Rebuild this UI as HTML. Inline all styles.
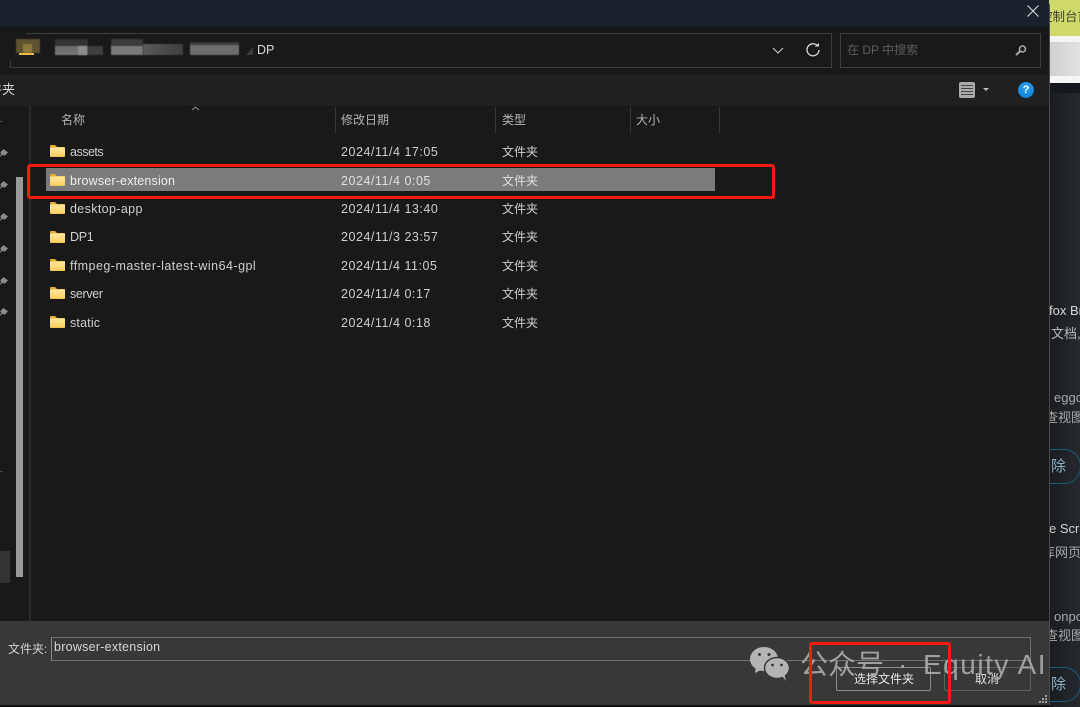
<!DOCTYPE html>
<html><head><meta charset="utf-8">
<style>
html,body{margin:0;padding:0}
body{width:1080px;height:707px;position:relative;overflow:hidden;background:#1b1f24;font-family:"Liberation Sans","Noto Sans CJK SC",sans-serif;font-size:12.5px;color:#cfcfcf}
.a{position:absolute}
.t{position:absolute;white-space:nowrap;line-height:16px}
.c{font-size:12px}
.d{letter-spacing:.53px}
.f{position:absolute;left:50px;width:15px;height:12px}
.sep{position:absolute;top:107px;width:1px;height:26px;background:#3a3a3a}
.pin{position:absolute;left:-1px;width:9px;height:9px}
.m{position:absolute;filter:blur(.6px)}
</style></head><body>
<!-- background window at right -->
<div class="a" style="left:1049px;top:0;width:31px;height:36px;background:#d0d96c"></div>
<div class="a" style="left:1049px;top:36px;width:31px;height:6px;background:#f4f4f4"></div>
<div class="a" style="left:1049px;top:42px;width:31px;height:34px;background:linear-gradient(90deg,#cfcfcf,#e2e2e2)"></div>
<div class="a" style="left:1049px;top:76px;width:31px;height:7px;background:#f6f6f6"></div>
<div class="a" style="left:1049px;top:83px;width:31px;height:624px;background:linear-gradient(90deg,#1a1c1f,#25292e)"></div>
<div class="a" style="left:1049px;top:83px;width:31px;height:10px;background:#15181c"></div>
<div class="t" style="left:1040px;top:9px;color:#3c4230;font-size:12.5px">控制台首</div>
<div class="t" style="left:1049px;top:303px;font-size:13px;color:#d8d8d8">fox Br</div>
<div class="t" style="left:1051px;top:326px;font-size:13px;color:#b8b8b8">文档,</div>
<div class="t" style="left:1054px;top:390px;font-size:13px;color:#a8a8a8">eggc</div>
<div class="t" style="left:1045px;top:410px;font-size:13px;color:#a8a8a8">查视图</div>
<div class="a" style="left:1020px;top:449px;width:61px;height:35px;border:1px solid #1b5a78;border-radius:17px;box-sizing:border-box"></div>
<div class="t" style="left:1036px;top:459px;font-size:15px;color:#8cb0c4">移除</div>
<div class="t" style="left:1049px;top:521px;font-size:13px;color:#d0d0d0">e Scra</div>
<div class="t" style="left:1042px;top:545px;font-size:13px;color:#a8a8a8">库网页</div>
<div class="t" style="left:1054px;top:609px;font-size:13px;color:#a8a8a8">onpo</div>
<div class="t" style="left:1045px;top:628px;font-size:13px;color:#a8a8a8">查视图</div>
<div class="a" style="left:1020px;top:667px;width:61px;height:35px;border:1px solid #1b5a78;border-radius:17px;box-sizing:border-box"></div>
<div class="t" style="left:1036px;top:677px;font-size:15px;color:#8cb0c4">移除</div>

<!-- dialog -->
<div class="a" style="left:0;top:0;width:1049px;height:705px;background:#191919;border-right:1px solid #4a4a4a;box-sizing:content-box;border-top-right-radius:6px;overflow:hidden">
  <div class="a" style="left:0;top:0;width:1049px;height:26px;background:#1a232c"></div>
  <div class="a" style="left:0;top:75px;width:1049px;height:31px;background:#202020"></div>
  <div class="a" style="left:0;top:621px;width:1049px;height:84px;background:#383838"></div>
</div>
<div class="a" style="left:0;top:705px;width:1049px;height:2px;background:#111"></div>

<!-- close -->
<svg class="a" style="left:1026px;top:4px" width="14" height="14" viewBox="0 0 14 14"><path d="M1.500 1.500L12.500 12.500M12.500 1.500L1.500 12.500" stroke="#e0e0e0" stroke-width="1" fill="none"/></svg>

<!-- address bar -->
<div class="a" style="left:10px;top:33px;width:822px;height:35px;border:1px solid #3d3d3d;box-sizing:border-box"></div>
<div class="a" style="left:0;top:30px;width:26px;height:30px;background:#191919"></div>
<div class="m" style="left:16px;top:39px;width:24px;height:14px;background:#5f5230"></div>
<div class="m" style="left:23px;top:44px;width:9px;height:9px;background:#8e7a3c"></div>
<div class="a" style="left:19px;top:53px;width:15px;height:2px;background:#e8b94a"></div>
<div class="m" style="left:55px;top:39px;width:33px;height:16px;background:linear-gradient(180deg,#333 0 45%,#6f6f6f 45% 80%,#7e7e7e 100%)"></div>
<div class="m" style="left:78px;top:46px;width:9px;height:9px;background:#8c8c8c"></div>
<div class="m" style="left:88px;top:46px;width:15px;height:9px;background:#3e3e3e"></div>
<div class="m" style="left:111px;top:39px;width:32px;height:16px;background:linear-gradient(180deg,#3a3a3a 0 45%,#7a7a7a 45% 100%)"></div>
<div class="m" style="left:143px;top:44px;width:40px;height:11px;background:linear-gradient(90deg,#5a5a5a,#3e3e3e)"></div>
<div class="m" style="left:190px;top:42px;width:49px;height:13px;background:linear-gradient(180deg,#3c3c3c 0 25%,#6c6c6c 25% 100%)"></div>
<svg class="a" style="left:246px;top:47px" width="8" height="8"><path d="M7 0V8H0Z" fill="#3a3a3a"/></svg>
<div class="t" style="left:257px;top:42px;color:#d8d8d8">DP</div>
<svg class="a" style="left:771px;top:46px" width="14" height="10" viewBox="0 0 14 10"><path d="M2 2L7 7L12 2" stroke="#cfcfcf" stroke-width="1.100" fill="none"/></svg>
<svg class="a" style="left:805px;top:42px" width="16" height="16" viewBox="0 0 16 16"><path d="M12.500 3.800A6 6 0 1 0 14 8" stroke="#d8d8d8" stroke-width="1.300" fill="none"/><path d="M9.500 4.500L14 4.500L14 1Z" fill="#d8d8d8"/></svg>
<div class="a" style="left:840px;top:33px;width:201px;height:35px;border:1px solid #3d3d3d;box-sizing:border-box"></div>
<div class="t" style="left:847px;top:42px;color:#5c5c5c;font-size:12px">在 DP 中搜索</div>
<svg class="a" style="left:1014px;top:44px" width="14" height="13" viewBox="0 0 14 13"><circle cx="8.500" cy="5" r="3" stroke="#a8a8a8" stroke-width="1.600" fill="none"/><path d="M6.300 7L2 11" stroke="#a8a8a8" stroke-width="2"/></svg>

<!-- toolbar -->
<div class="t" style="left:-11px;top:82px;color:#d4d4d4;font-size:13px">件夹</div>
<div class="a" style="left:959px;top:82px;width:16px;height:16px;background:#aaa;border-radius:2px"></div>
<div class="a" style="left:961px;top:85px;width:12px;height:1px;background:#444"></div>
<div class="a" style="left:961px;top:88px;width:12px;height:1px;background:#444"></div>
<div class="a" style="left:961px;top:91px;width:12px;height:1px;background:#444"></div>
<div class="a" style="left:961px;top:94px;width:12px;height:1px;background:#444"></div>
<svg class="a" style="left:983px;top:87px" width="7" height="5"><path d="M0 1H6L3 4Z" fill="#bbb"/></svg>
<div class="a" style="left:1018px;top:82px;width:16px;height:16px;border-radius:50%;background:radial-gradient(circle at 50% 35%,#2ba3f0,#0b78d0);color:#fff;font-size:11px;font-weight:bold;line-height:16px;text-align:center">?</div>

<!-- nav pane -->
<div class="a" style="left:29px;top:106px;width:2px;height:515px;background:#2a2a2a"></div>
<div class="a" style="left:16px;top:177px;width:7px;height:400px;background:#9b9b9b"></div>
<div class="a" style="left:0;top:551px;width:10px;height:32px;background:#333"></div>
<div class="a" style="left:0;top:471px;width:3px;height:1px;background:#444"></div>
<div class="a" style="left:0;top:121px;width:3px;height:1px;background:#444"></div>
<svg class="pin" style="top:149px" viewBox="0 0 8 8"><path d="M4 0L8 3L5 6L3 5L0 8L2 4L1 3Z" fill="#8c8c8c"/></svg>
<svg class="pin" style="top:181px" viewBox="0 0 8 8"><path d="M4 0L8 3L5 6L3 5L0 8L2 4L1 3Z" fill="#8c8c8c"/></svg>
<svg class="pin" style="top:213px" viewBox="0 0 8 8"><path d="M4 0L8 3L5 6L3 5L0 8L2 4L1 3Z" fill="#8c8c8c"/></svg>
<svg class="pin" style="top:245px" viewBox="0 0 8 8"><path d="M4 0L8 3L5 6L3 5L0 8L2 4L1 3Z" fill="#8c8c8c"/></svg>
<svg class="pin" style="top:277px" viewBox="0 0 8 8"><path d="M4 0L8 3L5 6L3 5L0 8L2 4L1 3Z" fill="#8c8c8c"/></svg>
<svg class="pin" style="top:308px" viewBox="0 0 8 8"><path d="M4 0L8 3L5 6L3 5L0 8L2 4L1 3Z" fill="#8c8c8c"/></svg>

<!-- headers -->
<svg class="a" style="left:191px;top:106px" width="9" height="5"><path d="M1 4L4.500 1L8 4" stroke="#8a8a8a" fill="none"/></svg>
<div class="t c" style="left:61px;top:112px;color:#b4b4b4">名称</div>
<div class="sep" style="left:335px"></div>
<div class="t c" style="left:341px;top:112px;color:#b4b4b4">修改日期</div>
<div class="sep" style="left:495px"></div>
<div class="t c" style="left:502px;top:112px;color:#b4b4b4">类型</div>
<div class="sep" style="left:630px"></div>
<div class="t c" style="left:636px;top:112px;color:#b4b4b4">大小</div>
<div class="sep" style="left:719px"></div>

<!-- selected row -->
<div class="a" style="left:46px;top:168px;width:669px;height:23px;background:#7b7b7b"></div>

<!-- rows -->
<svg width="0" height="0" style="position:absolute"><defs><linearGradient id="g" x1="0" y1="0" x2="0" y2="1"><stop offset="0" stop-color="#ffe89c"/><stop offset="1" stop-color="#fbd060"/></linearGradient></defs></svg>
<svg class="f" style="top:145px" viewBox="0 0 15 12"><path d="M0 1Q0 0 1 0H5L7 2H0Z" fill="#e8ad2e"/><rect x="0" y="2" width="15" height="10" rx="1" fill="#eebb44"/><rect x="0" y="2.600" width="15" height="8.800" fill="url(#g)"/></svg>
<svg class="f" style="top:174px" viewBox="0 0 15 12"><path d="M0 1Q0 0 1 0H5L7 2H0Z" fill="#e8ad2e"/><rect x="0" y="2" width="15" height="10" rx="1" fill="#eebb44"/><rect x="0" y="2.600" width="15" height="8.800" fill="url(#g)"/></svg>
<svg class="f" style="top:202px" viewBox="0 0 15 12"><path d="M0 1Q0 0 1 0H5L7 2H0Z" fill="#e8ad2e"/><rect x="0" y="2" width="15" height="10" rx="1" fill="#eebb44"/><rect x="0" y="2.600" width="15" height="8.800" fill="url(#g)"/></svg>
<svg class="f" style="top:231px" viewBox="0 0 15 12"><path d="M0 1Q0 0 1 0H5L7 2H0Z" fill="#e8ad2e"/><rect x="0" y="2" width="15" height="10" rx="1" fill="#eebb44"/><rect x="0" y="2.600" width="15" height="8.800" fill="url(#g)"/></svg>
<svg class="f" style="top:259px" viewBox="0 0 15 12"><path d="M0 1Q0 0 1 0H5L7 2H0Z" fill="#e8ad2e"/><rect x="0" y="2" width="15" height="10" rx="1" fill="#eebb44"/><rect x="0" y="2.600" width="15" height="8.800" fill="url(#g)"/></svg>
<svg class="f" style="top:287px" viewBox="0 0 15 12"><path d="M0 1Q0 0 1 0H5L7 2H0Z" fill="#e8ad2e"/><rect x="0" y="2" width="15" height="10" rx="1" fill="#eebb44"/><rect x="0" y="2.600" width="15" height="8.800" fill="url(#g)"/></svg>
<svg class="f" style="top:316px" viewBox="0 0 15 12"><path d="M0 1Q0 0 1 0H5L7 2H0Z" fill="#e8ad2e"/><rect x="0" y="2" width="15" height="10" rx="1" fill="#eebb44"/><rect x="0" y="2.600" width="15" height="8.800" fill="url(#g)"/></svg>

<div class="t" style="left:70px;top:144px;letter-spacing:-.5px">assets</div>
<div class="t d" style="left:341px;top:144px">2024/11/4 17:05</div>
<div class="t c" style="left:502px;top:144px">文件夹</div>

<div class="t" style="left:70px;top:173px;color:#eeeeee;letter-spacing:.18px">browser-extension</div>
<div class="t d" style="left:341px;top:173px;color:#e0e0e0">2024/11/4 0:05</div>
<div class="t c" style="left:502px;top:173px;color:#e0e0e0">文件夹</div>

<div class="t" style="left:70px;top:201px;letter-spacing:.36px">desktop-app</div>
<div class="t d" style="left:341px;top:201px">2024/11/4 13:40</div>
<div class="t c" style="left:502px;top:201px">文件夹</div>

<div class="t" style="left:70px;top:229px;letter-spacing:-.3px">DP1</div>
<div class="t d" style="left:341px;top:229px">2024/11/3 23:57</div>
<div class="t c" style="left:502px;top:229px">文件夹</div>

<div class="t" style="left:70px;top:258px;letter-spacing:.47px">ffmpeg-master-latest-win64-gpl</div>
<div class="t d" style="left:341px;top:258px">2024/11/4 11:05</div>
<div class="t c" style="left:502px;top:258px">文件夹</div>

<div class="t" style="left:70px;top:286px;letter-spacing:-.33px">server</div>
<div class="t d" style="left:341px;top:286px">2024/11/4 0:17</div>
<div class="t c" style="left:502px;top:286px">文件夹</div>

<div class="t" style="left:70px;top:315px;letter-spacing:.17px">static</div>
<div class="t d" style="left:341px;top:315px">2024/11/4 0:18</div>
<div class="t c" style="left:502px;top:315px">文件夹</div>

<!-- red highlight 1 -->
<div class="a" style="left:27px;top:164px;width:748px;height:35px;border:3px solid #f01c14;border-radius:3px;box-sizing:border-box"></div>

<!-- bottom -->
<div class="t c" style="left:8px;top:641px;color:#d0d0d0">文件夹:</div>
<div class="a" style="left:51px;top:637px;width:980px;height:24px;border:1px solid #707070;border-left:1px solid #8a8a8a;box-sizing:border-box"></div>
<div class="t" style="left:54px;top:639px;color:#d6d6d6;letter-spacing:.25px">browser-extension</div>
<div class="a" style="left:836px;top:667px;width:95px;height:24px;border:1px solid #8a8a8a;border-radius:2px;box-sizing:border-box"></div>
<div class="t c" style="left:854px;top:671px;color:#e8e8e8">选择文件夹</div>
<div class="a" style="left:944px;top:667px;width:87px;height:24px;border:1px solid #606060;border-radius:2px;box-sizing:border-box"></div>
<div class="t c" style="left:975px;top:671px;color:#e0e0e0">取消</div>
<svg class="a" style="left:1039px;top:695px" width="9" height="9"><g fill="#9a9a9a"><rect x="6" y="0" width="2" height="2"/><rect x="3" y="3" width="2" height="2"/><rect x="6" y="3" width="2" height="2"/><rect x="0" y="6" width="2" height="2"/><rect x="3" y="6" width="2" height="2"/><rect x="6" y="6" width="2" height="2"/></g></svg>

<!-- watermark -->
<svg class="a" style="left:749px;top:646px" width="42" height="36" viewBox="0 0 42 36"><ellipse cx="15" cy="13" rx="14" ry="12" fill="#b4b4b4"/><path d="M7 20L6 27L14 23Z" fill="#b4b4b4"/><ellipse cx="28" cy="22" rx="12.500" ry="10.500" fill="#b4b4b4" stroke="#383838" stroke-width="1.500"/><path d="M33 30L37 35L35 27Z" fill="#b4b4b4"/><circle cx="10.500" cy="8.500" r="1.500" fill="#383838"/><circle cx="20" cy="8.500" r="1.500" fill="#383838"/><circle cx="23.500" cy="19" r="1.400" fill="#383838"/><circle cx="32.500" cy="19" r="1.400" fill="#383838"/></svg>
<div class="t" style="left:800px;top:647px;font-size:28px;line-height:36px;color:#a9a9a9;opacity:.92">公众号</div>
<div class="t" style="left:898px;top:647px;font-size:28px;line-height:36px;color:#a9a9a9;opacity:.92">·</div>
<div class="t" style="left:923px;top:647px;font-size:28px;line-height:36px;color:#a9a9a9;letter-spacing:1.5px;opacity:.92">Equity AI</div>

<!-- red highlight 2 -->
<div class="a" style="left:809px;top:642px;width:142px;height:62px;border:3px solid #f01c14;border-radius:3px;box-sizing:border-box"></div>
</body></html>
